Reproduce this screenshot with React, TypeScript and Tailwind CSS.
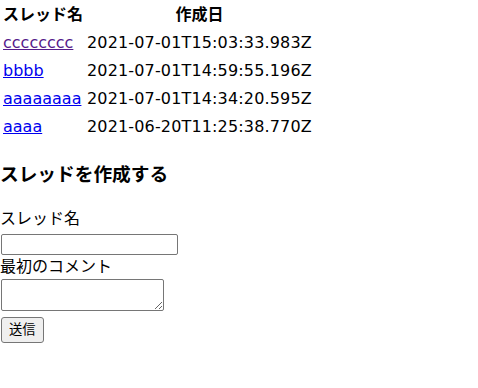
const threads = [
  { name: "cccccccc", createdAt: "2021-07-01T15:03:33.983Z", visited: true },
  { name: "bbbb", createdAt: "2021-07-01T14:59:55.196Z", visited: false },
  { name: "aaaaaaaa", createdAt: "2021-07-01T14:34:20.595Z", visited: false },
  { name: "aaaa", createdAt: "2021-06-20T11:25:38.770Z", visited: false },
];

export default function App() {
  return (
    <div className="w-[478px] h-[388px] bg-white text-black text-base font-['DejaVu_Sans','Noto_Sans_CJK_JP',sans-serif] leading-6">
      <table className="border-separate border-spacing-[2px]">
        <thead>
          <tr>
            <th className="p-px font-bold text-center">スレッド名</th>
            <th className="p-px font-bold text-center">作成日</th>
          </tr>
        </thead>
        <tbody>
          {threads.map((t) => (
            <tr key={t.name}>
              <td className="p-px">
                <a href="#" className={t.visited ? "underline text-[#551a8b]" : "underline text-[#0000ee]"}>
                  {t.name}
                </a>
              </td>
              <td className="p-px tracking-[0.15px]">{t.createdAt}</td>
            </tr>
          ))}
        </tbody>
      </table>

      <h3 className="mt-[19px] mb-[18px] text-[18.7px] font-bold leading-[28px]">スレッドを作成する</h3>

      <form className="flex flex-col items-start">
        <label>スレッド名</label>
        <input
          type="text"
          className="mt-[3px] ml-px w-[177px] h-[21px] border border-[#767676] rounded-[2px] px-[2px] bg-white"
        />
        <label>最初のコメント</label>
        <textarea className="ml-px w-[163px] h-[32px] border border-[#767676] rounded-[2px] bg-white" />
        <button
          type="button"
          className="mt-[6px] ml-px h-[26px] px-[7px] border border-[#767676] rounded-[3px] bg-[#efefef] text-[13.3px] leading-none"
        >
          送信
        </button>
      </form>
    </div>
  );
}
